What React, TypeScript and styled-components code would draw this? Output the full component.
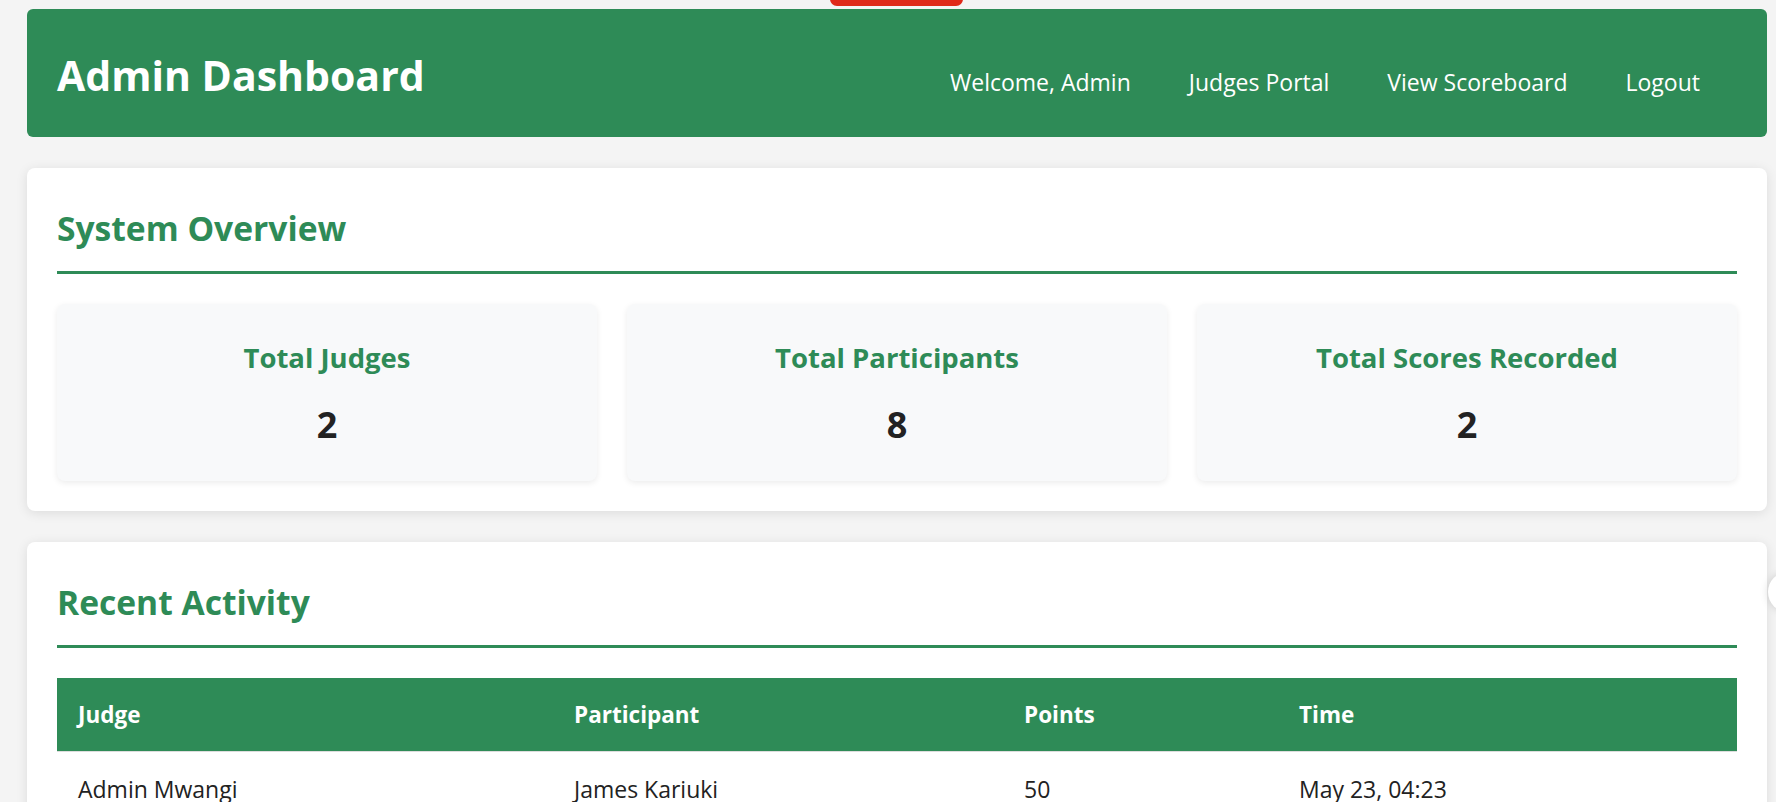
import React from "react";
import styled, { createGlobalStyle } from "styled-components";

const GREEN = "#2e8b57";

const GlobalStyle = createGlobalStyle`
  html, body {
    margin: 0;
    padding: 0;
    background: #f4f4f4;
    font-family: "Open Sans", "Noto Sans", Arial, sans-serif;
    color: #222;
  }
  * { box-sizing: border-box; }
`;

const Page = styled.div`
  position: relative;
  padding: 9px 9px 30px 27px;
  display: flex;
  flex-direction: column;
  gap: 31px;
`;

const TopBadge = styled.div`
  position: absolute;
  left: 830px;
  top: -24px;
  width: 133px;
  height: 30px;
  border-radius: 7px;
  background: #e0291a;
`;

const SideBubble = styled.div`
  position: absolute;
  left: 1768px;
  top: 572px;
  width: 40px;
  height: 40px;
  border-radius: 50%;
  background: #ffffff;
  box-shadow: 0 0 8px rgba(0, 0, 0, 0.15);
`;

const Header = styled.header`
  height: 128px;
  background: ${GREEN};
  border-radius: 6px;
  color: #fff;
  display: flex;
  justify-content: space-between;
  align-items: baseline;
  padding: 38px 47px 0 30px;
`;

const Title = styled.h1`
  margin: 0;
  font-size: 41px;
  font-weight: 700;
  line-height: normal;
`;

const Nav = styled.nav`
  display: flex;
  align-items: baseline;
  gap: 18px;
`;

const NavLink = styled.a`
  color: #fff;
  text-decoration: none;
  font-size: 23px;
  padding: 8px 20px;
`;

const Card = styled.section`
  background: #fff;
  border-radius: 8px;
  box-shadow: 0 2px 12px rgba(0, 0, 0, 0.1);
  padding: 30px;
`;

const SectionTitle = styled.h2`
  margin: 7px 0 30px;
  padding-bottom: 20px;
  border-bottom: 3px solid ${GREEN};
  color: ${GREEN};
  font-size: 33.6px;
  font-weight: 700;
  line-height: normal;
`;

const StatGrid = styled.div`
  display: grid;
  grid-template-columns: repeat(3, 1fr);
  gap: 30px;
`;

const StatCard = styled.div`
  background: #f8f9fa;
  border-radius: 8px;
  box-shadow: 0 2px 6px rgba(0, 0, 0, 0.08);
  padding: 35px 20px 32px;
  text-align: center;
`;

const StatLabel = styled.h3`
  margin: 0 0 24px;
  color: ${GREEN};
  font-size: 27.5px;
  font-weight: 700;
  line-height: normal;
`;

const StatValue = styled.div`
  font-size: 36px;
  font-weight: 700;
  color: #222;
  line-height: normal;
`;

const Table = styled.table`
  width: 100%;
  border-collapse: collapse;
  table-layout: fixed;
`;

const Th = styled.th<{ $w: number }>`
  width: ${(p) => p.$w}px;
  background: ${GREEN};
  color: #fff;
  text-align: left;
  font-size: 22.5px;
  font-weight: 700;
  padding: 21px 21px;
  line-height: normal;
`;

const Td = styled.td`
  padding: 21px 21px;
  font-size: 23px;
  color: #222;
  border-top: 1px solid #ddd;
  line-height: normal;
`;

const stats = [
  { label: "Total Judges", value: 2 },
  { label: "Total Participants", value: 8 },
  { label: "Total Scores Recorded", value: 2 },
];

const columns = [
  { name: "Judge", w: 496 },
  { name: "Participant", w: 450 },
  { name: "Points", w: 275 },
  { name: "Time", w: 459 },
];

const rows = [
  ["Admin Mwangi", "James Kariuki", "50", "May 23, 04:23"],
  ["Admin Mwangi", "Grace Wanjiru", "45", "May 23, 04:20"],
];

export default function App() {
  return (
    <>
      <GlobalStyle />
      <Page>
        <TopBadge />
        <SideBubble />
        <Header>
          <Title>Admin Dashboard</Title>
          <Nav>
            <NavLink href="#">Welcome, Admin</NavLink>
            <NavLink href="#">Judges Portal</NavLink>
            <NavLink href="#">View Scoreboard</NavLink>
            <NavLink href="#">Logout</NavLink>
          </Nav>
        </Header>
        <Card>
          <SectionTitle>System Overview</SectionTitle>
          <StatGrid>
            {stats.map((s) => (
              <StatCard key={s.label}>
                <StatLabel>{s.label}</StatLabel>
                <StatValue>{s.value}</StatValue>
              </StatCard>
            ))}
          </StatGrid>
        </Card>
        <Card>
          <SectionTitle>Recent Activity</SectionTitle>
          <Table>
            <thead>
              <tr>
                {columns.map((c) => (
                  <Th key={c.name} $w={c.w}>
                    {c.name}
                  </Th>
                ))}
              </tr>
            </thead>
            <tbody>
              {rows.map((r, i) => (
                <tr key={i}>
                  {r.map((cell, j) => (
                    <Td key={j}>{cell}</Td>
                  ))}
                </tr>
              ))}
            </tbody>
          </Table>
        </Card>
      </Page>
    </>
  );
}
